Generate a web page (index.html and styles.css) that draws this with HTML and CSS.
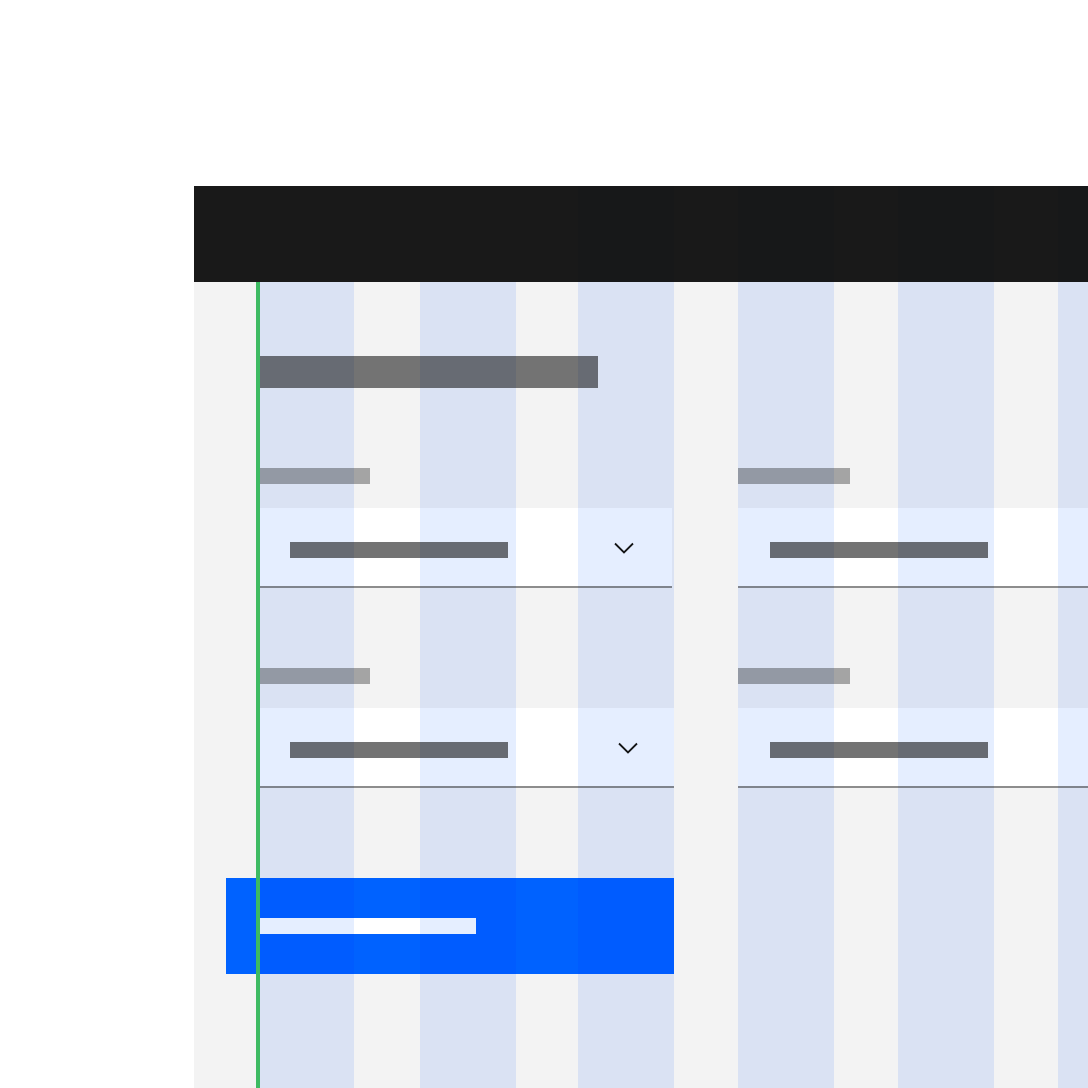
FILE: index.html
```html
<!DOCTYPE html>
<html lang="en">
<head>
<meta charset="utf-8">
<title>Form layout grid</title>
<link rel="stylesheet" href="styles.css">
</head>
<body>
<div class="frame">
  <header class="masthead"></header>
  <main class="content">
    <div class="title-bar"></div>
    <div class="row">
      <div class="field field-left">
        <div class="label-bar"></div>
        <div class="dropdown dd-a">
          <span class="value-bar"></span>
          <svg class="chev" width="20" height="12" viewBox="0 0 20 12"><polyline points="1,1.5 10,10.5 19,1.5"/></svg>
        </div>
      </div>
      <div class="field field-right">
        <div class="label-bar"></div>
        <div class="dropdown dd-r">
          <span class="value-bar"></span>
          <svg class="chev" width="20" height="12" viewBox="0 0 20 12"><polyline points="1,1.5 10,10.5 19,1.5"/></svg>
        </div>
      </div>
    </div>
    <div class="row">
      <div class="field field-left">
        <div class="label-bar"></div>
        <div class="dropdown dd-b">
          <span class="value-bar"></span>
          <svg class="chev" width="20" height="12" viewBox="0 0 20 12"><polyline points="1,1.5 10,10.5 19,1.5"/></svg>
        </div>
      </div>
      <div class="field field-right">
        <div class="label-bar"></div>
        <div class="dropdown dd-r">
          <span class="value-bar"></span>
          <svg class="chev" width="20" height="12" viewBox="0 0 20 12"><polyline points="1,1.5 10,10.5 19,1.5"/></svg>
        </div>
      </div>
    </div>
    <div class="button"><span class="button-bar"></span></div>
  </main>
  <div class="grid-overlay">
    <div class="col c1"></div>
    <div class="col c2"></div>
    <div class="col c3"></div>
    <div class="col c4"></div>
    <div class="col c5"></div>
    <div class="col c6"></div>
  </div>
  <div class="guide"></div>
</div>
</body>
</html>
```

FILE: styles.css
```css
html, body {
  margin: 0;
  padding: 0;
  background: #ffffff;
  width: 1088px;
  height: 1088px;
  overflow: hidden;
  font-family: "Liberation Sans", Arial, sans-serif;
}

.frame {
  position: relative;
  margin: 186px 0 0 194px;
  width: 894px;
  height: 902px;
  overflow: hidden;
}

.masthead {
  height: 96px;
  background: #191919;
}

.content {
  background: #f3f3f3;
  height: 806px;
  padding: 74px 0 0 64px;
  box-sizing: border-box;
  display: flex;
  flex-direction: column;
  align-items: flex-start;
}

.title-bar {
  width: 340px;
  height: 32px;
  background: #737373;
}

.row {
  display: flex;
  margin-top: 80px;
  width: 960px;
  flex: none;
}

.field {
  display: flex;
  flex-direction: column;
  flex: none;
}

.field-left {
  width: 480px;
}

.field-right {
  width: 420px;
}

.label-bar {
  width: 112px;
  height: 16px;
  background: #a4a4a4;
  margin-bottom: 24px;
}

.dropdown {
  box-sizing: border-box;
  height: 80px;
  background: #ffffff;
  border-bottom: 2px solid #8d8d8d;
  padding: 34px 0 0 32px;
  display: flex;
  align-items: flex-start;
}

.dd-a { width: 414px; }
.dd-b { width: 416px; }
.dd-r { width: 414px; }

.value-bar {
  display: block;
  width: 218px;
  height: 16px;
  background: #737373;
  flex: none;
}

.chev {
  flex: none;
  margin-left: 106px;
  fill: none;
  stroke: #161616;
  stroke-width: 1.8;
}

.dd-b .chev {
  margin-left: 110px;
}

.button {
  margin: 90px 0 0 -32px;
  width: 448px;
  height: 96px;
  box-sizing: border-box;
  padding: 40px 0 0 32px;
  background: #0062ff;
}

.button-bar {
  display: block;
  width: 218px;
  height: 16px;
  background: #ffffff;
}

.grid-overlay {
  position: absolute;
  inset: 0;
  pointer-events: none;
}

.col {
  position: absolute;
  top: 0;
  bottom: 0;
  width: 96px;
  background: #e5eeff;
  mix-blend-mode: multiply;
}

.c1 { left: 64px; top: 96px; }
.c2 { left: 226px; top: 96px; }
.c3 { left: 384px; }
.c4 { left: 544px; }
.c5 { left: 704px; }
.c6 { left: 864px; }

.guide {
  position: absolute;
  left: 62px;
  top: 96px;
  bottom: 0;
  width: 4px;
  background: #3dba62;
}
```
